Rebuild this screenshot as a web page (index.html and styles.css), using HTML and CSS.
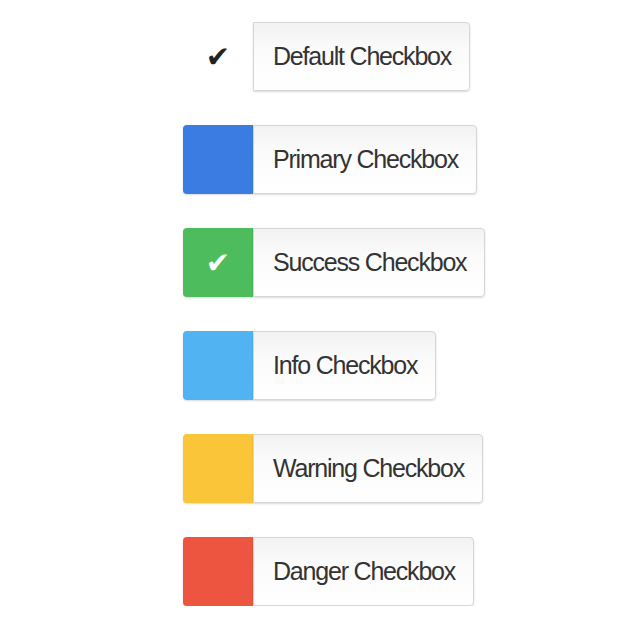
FILE: index.html
```html
<!DOCTYPE html>
<html>
<head>
<meta charset="utf-8">
<link rel="stylesheet" href="styles.css">
</head>
<body>
<div class="list">
  <div class="group">
    <span class="box box-default"><span class="check dark">&#10004;</span></span>
    <span class="label">Default Checkbox</span>
  </div>
  <div class="group">
    <span class="box box-primary"></span>
    <span class="label">Primary Checkbox</span>
  </div>
  <div class="group">
    <span class="box box-success"><span class="check light">&#10004;</span></span>
    <span class="label">Success Checkbox</span>
  </div>
  <div class="group">
    <span class="box box-info"></span>
    <span class="label">Info Checkbox</span>
  </div>
  <div class="group">
    <span class="box box-warning"></span>
    <span class="label">Warning Checkbox</span>
  </div>
  <div class="group">
    <span class="box box-danger"></span>
    <span class="label">Danger Checkbox</span>
  </div>
</div>
</body>
</html>
```
FILE: styles.css
```css
html, body {
  margin: 0;
  padding: 0;
  background: #ffffff;
}
body {
  font-family: "Liberation Sans", Arial, sans-serif;
}
.list {
  display: flex;
  flex-direction: column;
  align-items: flex-start;
  gap: 34px;
  padding: 22px 0 0 183px;
}
.group {
  display: flex;
  height: 69px;
}
.box {
  width: 70px;
  height: 69px;
  box-sizing: border-box;
  border-radius: 4px 0 0 4px;
  display: flex;
  align-items: center;
  justify-content: center;
  box-shadow: 0 1px 2px rgba(0, 0, 0, 0.15);
}
.box-default { background: #ffffff; box-shadow: none; }
.box-primary { background: #3a7ce2; }
.box-success { background: #4cbc5c; }
.box-info { background: #52b3f2; }
.box-warning { background: #fbc53a; }
.box-danger { background: #ee5540; }
.check {
  font-family: "DejaVu Sans", sans-serif;
  font-size: 29px;
  line-height: 1;
  margin-top: 2px;
}
.check.dark { color: #222222; }
.check.light { color: #ffffff; }
.label {
  display: flex;
  align-items: center;
  height: 69px;
  box-sizing: border-box;
  padding: 0 18px 0 19px;
  border: 1px solid #d6d6d6;
  border-radius: 0 4px 4px 0;
  background: linear-gradient(#f2f2f2, #fbfbfb 40%, #ffffff);
  box-shadow: 0 1px 2px rgba(0, 0, 0, 0.15);
  font-size: 25px;
  letter-spacing: -1.2px;
  color: #333333;
  white-space: nowrap;
}
```
